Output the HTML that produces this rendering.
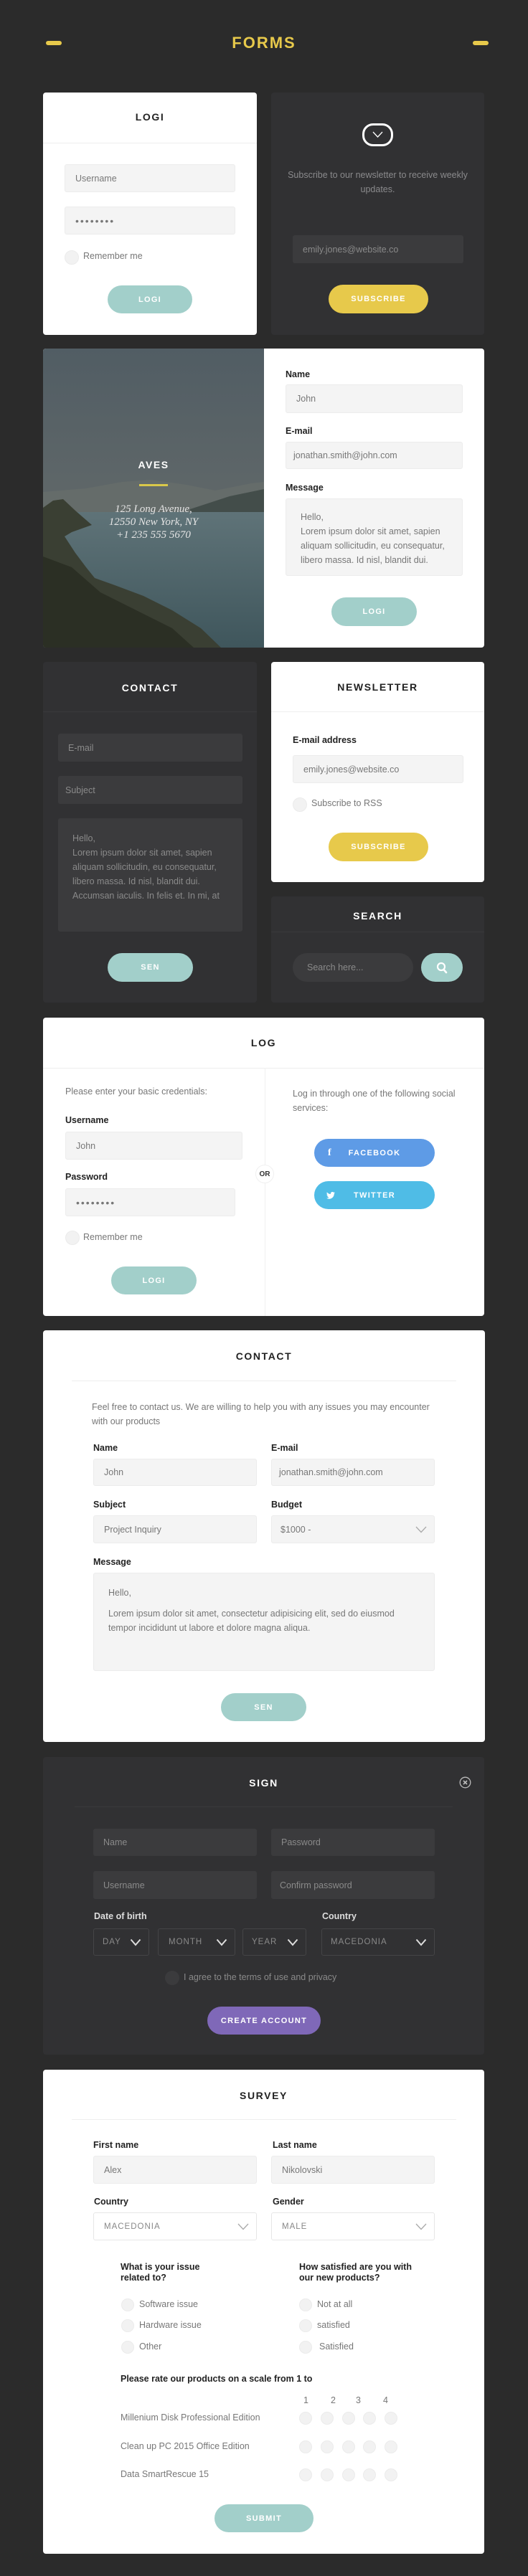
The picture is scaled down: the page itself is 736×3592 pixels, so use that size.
<!DOCTYPE html>
<html><head><meta charset="utf-8">
<style>
*{margin:0;padding:0;box-sizing:border-box}
body{width:736px;height:3592px;background:#2b2b2b;position:relative;font-family:"Liberation Sans",sans-serif;overflow:hidden}
.a{position:absolute}
.card{position:absolute;border-radius:4px}
.w{background:#fff}
.d{background:#313133}
.t{position:absolute;left:0;right:0;text-align:center;font-weight:bold;font-size:14px;letter-spacing:1.6px}
.hr{position:absolute;height:1px;background:#eeeeee}
.hrd{position:absolute;height:1px;background:#3a3a3c}
.in{position:absolute;background:#f4f4f4;border:1px solid #ececec;border-radius:3px;color:#777;font-size:12.5px;padding-left:14px;display:flex;align-items:center}
.ind{position:absolute;background:#3b3b3d;border-radius:3px;color:#8a8a8a;font-size:12.5px;padding-left:14px;display:flex;align-items:center}
.ta{display:block !important}
.lb{position:absolute;font-weight:bold;font-size:12.5px;color:#222}
.btn{position:absolute;border-radius:20px;color:#fff;font-weight:bold;font-size:11px;letter-spacing:1.3px;display:flex;align-items:center;justify-content:center}
.teal{background:#a2cfca}
.yel{background:#e7c94b}
.rad{position:absolute;width:18px;height:18px;border-radius:50%;background:#f2f2f2;border:1px solid #ebebeb}
.tx{position:absolute;font-size:12.5px;color:#777}
.sel{position:absolute;border:1px solid #e6e6e6;background:#fff;border-radius:3px;font-size:11.5px;letter-spacing:1px;color:#888;padding-left:14px;display:flex;align-items:center}
.seld{position:absolute;border:1px solid #454547;border-radius:3px;font-size:11.5px;letter-spacing:1px;color:#8a8a8a;padding-left:12px;display:flex;align-items:center}
.chev{position:absolute;top:50%;margin-top:-5px}
</style></head><body>

<!-- header -->
<div class="a" style="left:64px;top:57px;width:22px;height:6px;border-radius:3px;background:#e7c94b"></div>
<div class="a" style="left:659px;top:57px;width:22px;height:6px;border-radius:3px;background:#e7c94b"></div>
<div class="a" style="left:0;right:0;top:47px;text-align:center;color:#e7c94b;font-weight:bold;font-size:22px;letter-spacing:2px">FORMS</div>

<!-- login card -->
<div class="card w" style="left:60px;top:129px;width:298px;height:338px">
  <div class="t" style="top:26px;color:#222">LOGI</div>
  <div class="hr" style="left:0;right:0;top:70px"></div>
  <div class="in" style="left:30px;top:100px;width:238px;height:39px">Username</div>
  <div class="in" style="left:30px;top:159px;width:238px;height:39px;letter-spacing:2px;font-size:14px;color:#777">••••••••</div>
  <div class="rad" style="left:30px;top:220px;width:20px;height:20px"></div>
  <div class="tx" style="left:56px;top:221px">Remember me</div>
  <div class="btn teal" style="left:90px;top:269px;width:118px;height:39px">LOGI</div>
</div>

<!-- subscribe dark card -->
<div class="card d" style="left:378px;top:129px;width:297px;height:338px">
  <div class="a" style="left:127px;top:43px;width:43px;height:32px;border:3px solid #fff;border-radius:15px"></div>
  <svg class="a" style="left:140px;top:53px" width="17" height="12" viewBox="0 0 17 12"><path d="M2 2 L8.5 9 L15 2" fill="none" stroke="#fff" stroke-width="1.3"/></svg>
  <div class="a" style="left:20px;right:20px;top:105px;text-align:center;font-size:12.5px;line-height:20px;color:#8a8a8c">Subscribe to our newsletter to receive weekly updates.</div>
  <div class="ind" style="left:30px;top:199px;width:238px;height:39px">emily.jones@website.co</div>
  <div class="btn yel" style="left:80px;top:268px;width:139px;height:40px">SUBSCRIBE</div>
</div>

<!-- image + contact -->
<div class="card" style="left:60px;top:486px;width:615px;height:417px;overflow:hidden;background:#fff">
  <svg class="a" style="left:0;top:0" width="308" height="417" viewBox="0 0 308 417">
    <defs>
      <linearGradient id="sky" x1="0" y1="0" x2="0" y2="1"><stop offset="0" stop-color="#515d64"/><stop offset="1" stop-color="#6d716d"/></linearGradient>
      <linearGradient id="lake" x1="0" y1="0" x2="0" y2="1"><stop offset="0" stop-color="#5f7378"/><stop offset="1" stop-color="#3f565c"/></linearGradient>
    </defs>
    <rect width="308" height="417" fill="url(#sky)"/>
    <path d="M0 200 L60 195 L110 186 L150 183 L200 190 L240 198 L290 188 L308 186 L308 232 L0 232Z" fill="#656c6a"/>
    <path d="M205 224 L260 206 L308 196 L308 230 L205 230Z" fill="#434d4a"/>
    <rect x="0" y="228" width="308" height="189" fill="url(#lake)"/>
    <path d="M0 222 L14 212 L28 210 L45 226 L68 246 L40 256 L30 262 L45 285 L60 305 L72 320 L100 330 L140 345 L180 365 L220 390 L248 417 L0 417Z" fill="#3a3f33"/>
    <path d="M0 290 L40 305 L80 340 L130 365 L180 390 L210 417 L0 417Z" fill="#2b2f24"/>
  </svg>
  <div class="a" style="left:0;width:308px;top:154px;text-align:center;color:#fff;font-weight:bold;font-size:14px;letter-spacing:1.5px">AVES</div>
  <div class="a" style="left:134px;top:189px;width:40px;height:3px;background:#d9c84a"></div>
  <div class="a" style="left:0;width:308px;top:215px;text-align:center;color:#e4e4e4;font-family:'Liberation Serif',serif;font-style:italic;font-size:15px;line-height:18px">125 Long Avenue,<br>12550 New York, NY<br>+1 235 555 5670</div>
  <div class="lb" style="left:338px;top:29px">Name</div>
  <div class="in" style="left:338px;top:50px;width:247px;height:40px">John</div>
  <div class="lb" style="left:338px;top:108px">E-mail</div>
  <div class="in" style="left:338px;top:130px;width:247px;height:38px;padding-left:10px">jonathan.smith@john.com</div>
  <div class="lb" style="left:338px;top:187px">Message</div>
  <div class="in ta" style="left:338px;top:209px;width:247px;height:108px;padding:15px 14px 0 20px;line-height:20px">Hello,<br>Lorem ipsum dolor sit amet, sapien aliquam sollicitudin, eu consequatur, libero massa. Id nisl, blandit dui.</div>
  <div class="btn teal" style="left:402px;top:347px;width:119px;height:40px">LOGI</div>
</div>

<!-- contact dark -->
<div class="card d" style="left:60px;top:923px;width:298px;height:475px">
  <div class="t" style="top:28px;color:#fff">CONTACT</div>
  <div class="hrd" style="left:0;right:0;top:69px"></div>
  <div class="ind" style="left:21px;top:100px;width:257px;height:39px">E-mail</div>
  <div class="ind" style="left:21px;top:159px;width:257px;height:39px;padding-left:10px">Subject</div>
  <div class="ind ta" style="left:21px;top:218px;width:257px;height:158px;padding:18px 14px 0 20px;line-height:20px">Hello,<br>Lorem ipsum dolor sit amet, sapien aliquam sollicitudin, eu consequatur, libero massa. Id nisl, blandit dui. Accumsan iaculis. In felis et. In mi, at</div>
  <div class="btn teal" style="left:90px;top:406px;width:119px;height:40px">SEN</div>
</div>

<!-- newsletter -->
<div class="card w" style="left:378px;top:923px;width:297px;height:307px">
  <div class="t" style="top:27px;color:#222">NEWSLETTER</div>
  <div class="hr" style="left:0;right:0;top:69px"></div>
  <div class="lb" style="left:30px;top:102px">E-mail address</div>
  <div class="in" style="left:30px;top:130px;width:238px;height:39px">emily.jones@website.co</div>
  <div class="rad" style="left:30px;top:189px;width:20px;height:20px"></div>
  <div class="tx" style="left:56px;top:190px">Subscribe to RSS</div>
  <div class="btn yel" style="left:80px;top:238px;width:139px;height:40px">SUBSCRIBE</div>
</div>

<!-- search -->
<div class="card d" style="left:378px;top:1250px;width:297px;height:148px">
  <div class="t" style="top:19px;color:#fff">SEARCH</div>
  <div class="hrd" style="left:0;right:0;top:49px"></div>
  <div class="ind" style="left:30px;top:79px;width:168px;height:40px;border-radius:20px;padding-left:20px">Search here...</div>
  <div class="a" style="left:209px;top:79px;width:58px;height:40px;border-radius:20px;background:#a2cfca"></div>
  <svg class="a" style="left:230px;top:91px" width="16" height="17" viewBox="0 0 16 17"><circle cx="7" cy="7" r="5" fill="none" stroke="#fff" stroke-width="2.2"/><path d="M10.5 11 L14 15" stroke="#fff" stroke-width="2.6" stroke-linecap="round"/></svg>
</div>

<!-- LOG -->
<div class="card w" style="left:60px;top:1419px;width:615px;height:416px">
  <div class="t" style="top:27px;color:#222">LOG</div>
  <div class="hr" style="left:0;right:0;top:70px"></div>
  <div class="a" style="left:309px;top:70px;width:1px;bottom:0;background:#f0f0f0"></div>
  <div class="a" style="left:296px;top:205px;width:26px;height:26px;border-radius:50%;background:#fff;border:1px solid #f0f0f0;font-size:10px;font-weight:bold;color:#333;display:flex;align-items:center;justify-content:center">OR</div>
  <div class="tx" style="left:31px;top:96px">Please enter your basic credentials:</div>
  <div class="lb" style="left:31px;top:136px">Username</div>
  <div class="in" style="left:31px;top:159px;width:247px;height:39px">John</div>
  <div class="lb" style="left:31px;top:215px">Password</div>
  <div class="in" style="left:31px;top:238px;width:237px;height:39px;letter-spacing:2px;font-size:14px">••••••••</div>
  <div class="rad" style="left:31px;top:297px;width:20px;height:20px"></div>
  <div class="tx" style="left:56px;top:299px">Remember me</div>
  <div class="btn teal" style="left:95px;top:347px;width:119px;height:39px">LOGI</div>
  <div class="tx" style="left:348px;top:96px;width:240px;line-height:20px">Log in through one of the following social services:</div>
  <div class="btn" style="left:378px;top:169px;width:168px;height:39px;background:#5e9be6"><span style="position:absolute;left:19px;font-size:14px;font-family:'Liberation Serif',serif">f</span>FACEBOOK</div>
  <div class="btn" style="left:378px;top:228px;width:168px;height:39px;background:#4fbce6"><svg style="position:absolute;left:17px" width="12" height="10" viewBox="0 0 24 20"><path d="M24 2.4a9.8 9.8 0 0 1-2.8.8A4.9 4.9 0 0 0 23.3.4a9.9 9.9 0 0 1-3.1 1.2A4.9 4.9 0 0 0 11.8 6 14 14 0 0 1 1.7.9a4.9 4.9 0 0 0 1.5 6.6A4.9 4.9 0 0 1 1 6.9a4.9 4.9 0 0 0 3.9 4.8 4.9 4.9 0 0 1-2.2.1 4.9 4.9 0 0 0 4.6 3.4A9.9 9.9 0 0 1 0 17.3 14 14 0 0 0 7.5 19.5c9 0 14-7.5 14-14v-.6A10 10 0 0 0 24 2.4z" fill="#fff"/></svg>TWITTER</div>
</div>

<!-- CONTACT white -->
<div class="card w" style="left:60px;top:1855px;width:616px;height:574px">
  <div class="t" style="top:28px;color:#222">CONTACT</div>
  <div class="hr" style="left:40px;width:536px;top:70px"></div>
  <div class="tx" style="left:68px;top:97px;width:480px;line-height:20px">Feel free to contact us. We are willing to help you with any issues you may encounter with our products</div>
  <div class="lb" style="left:70px;top:157px">Name</div>
  <div class="lb" style="left:318px;top:157px">E-mail</div>
  <div class="in" style="left:70px;top:179px;width:228px;height:38px">John</div>
  <div class="in" style="left:318px;top:179px;width:228px;height:38px;padding-left:10px">jonathan.smith@john.com</div>
  <div class="lb" style="left:70px;top:236px">Subject</div>
  <div class="lb" style="left:318px;top:236px">Budget</div>
  <div class="in" style="left:70px;top:258px;width:228px;height:39px">Project Inquiry</div>
  <div class="in" style="left:318px;top:258px;width:228px;height:39px;padding-left:12px">$1000 -<svg class="chev" style="right:10px" width="16" height="10" viewBox="0 0 16 10"><path d="M1 1 L8 8.5 L15 1" fill="none" stroke="#aaa" stroke-width="1.3"/></svg></div>
  <div class="lb" style="left:70px;top:316px">Message</div>
  <div class="in ta" style="left:70px;top:338px;width:476px;height:137px;padding:17px 20px 0 20px;line-height:20px">Hello,<div style="margin-top:9px">Lorem ipsum dolor sit amet, consectetur adipisicing elit, sed do eiusmod tempor incididunt ut labore et dolore magna aliqua.</div></div>
  <div class="btn teal" style="left:248px;top:506px;width:119px;height:39px">SEN</div>
</div>

<!-- SIGN dark -->
<div class="card d" style="left:60px;top:2450px;width:615px;height:415px">
  <div class="t" style="top:28px;color:#fff">SIGN</div>
  <svg class="a" style="left:580px;top:27px" width="17" height="17" viewBox="0 0 17 17"><circle cx="8.5" cy="8.5" r="7.3" fill="none" stroke="#bbb" stroke-width="1.3"/><path d="M6 6 L11 11 M11 6 L6 11" stroke="#bbb" stroke-width="1.6"/></svg>
  <div class="hrd" style="left:44px;width:527px;top:69px"></div>
  <div class="ind" style="left:70px;top:100px;width:228px;height:38px">Name</div>
  <div class="ind" style="left:318px;top:100px;width:228px;height:38px">Password</div>
  <div class="ind" style="left:70px;top:159px;width:228px;height:39px">Username</div>
  <div class="ind" style="left:318px;top:159px;width:228px;height:39px;padding-left:12px">Confirm password</div>
  <div class="lb" style="left:71px;top:215px;color:#ddd">Date of birth</div>
  <div class="lb" style="left:389px;top:215px;color:#ddd">Country</div>
  <div class="seld" style="left:70px;top:239px;width:78px;height:38px">DAY<svg class="chev" style="right:10px" width="16" height="11" viewBox="0 0 16 11"><path d="M1.5 1.5 L8 9 L14.5 1.5" fill="none" stroke="#ddd" stroke-width="2"/></svg></div>
  <div class="seld" style="left:160px;top:239px;width:108px;height:38px;padding-left:14px">MONTH<svg class="chev" style="right:10px" width="16" height="11" viewBox="0 0 16 11"><path d="M1.5 1.5 L8 9 L14.5 1.5" fill="none" stroke="#ddd" stroke-width="2"/></svg></div>
  <div class="seld" style="left:278px;top:239px;width:89px;height:38px">YEAR<svg class="chev" style="right:10px" width="16" height="11" viewBox="0 0 16 11"><path d="M1.5 1.5 L8 9 L14.5 1.5" fill="none" stroke="#ddd" stroke-width="2"/></svg></div>
  <div class="seld" style="left:388px;top:239px;width:158px;height:38px">MACEDONIA<svg class="chev" style="right:10px" width="16" height="11" viewBox="0 0 16 11"><path d="M1.5 1.5 L8 9 L14.5 1.5" fill="none" stroke="#ddd" stroke-width="2"/></svg></div>
  <div class="a" style="left:170px;top:298px;width:20px;height:20px;border-radius:50%;background:#3b3b3d"></div>
  <div class="tx" style="left:196px;top:300px;color:#8a8a8a">I agree to the terms of use and privacy</div>
  <div class="btn" style="left:229px;top:348px;width:158px;height:39px;background:#7f68b8">CREATE ACCOUNT</div>
</div>

<!-- SURVEY -->
<div class="card w" style="left:60px;top:2886px;width:615px;height:675px">
  <div class="t" style="top:28px;color:#222">SURVEY</div>
  <div class="hr" style="left:40px;width:536px;top:69px"></div>
  <div class="lb" style="left:70px;top:98px">First name</div>
  <div class="lb" style="left:320px;top:98px">Last name</div>
  <div class="in" style="left:70px;top:120px;width:228px;height:39px">Alex</div>
  <div class="in" style="left:318px;top:120px;width:228px;height:39px">Nikolovski</div>
  <div class="lb" style="left:71px;top:177px">Country</div>
  <div class="lb" style="left:320px;top:177px">Gender</div>
  <div class="sel" style="left:70px;top:199px;width:228px;height:39px">MACEDONIA<svg class="chev" style="right:10px" width="16" height="10" viewBox="0 0 16 10"><path d="M1 1 L8 8.5 L15 1" fill="none" stroke="#aaa" stroke-width="1.3"/></svg></div>
  <div class="sel" style="left:318px;top:199px;width:228px;height:39px">MALE<svg class="chev" style="right:10px" width="16" height="10" viewBox="0 0 16 10"><path d="M1 1 L8 8.5 L15 1" fill="none" stroke="#aaa" stroke-width="1.3"/></svg></div>
  <div class="lb" style="left:108px;top:268px;line-height:15px">What is your issue<br>related to?</div>
  <div class="lb" style="left:357px;top:268px;line-height:15px">How satisfied are you with<br>our new products?</div>
  <div class="rad" style="left:109px;top:319px"></div><div class="tx" style="left:134px;top:320px">Software issue</div>
  <div class="rad" style="left:109px;top:348px"></div><div class="tx" style="left:134px;top:349px">Hardware issue</div>
  <div class="rad" style="left:109px;top:378px"></div><div class="tx" style="left:134px;top:379px">Other</div>
  <div class="rad" style="left:357px;top:319px"></div><div class="tx" style="left:382px;top:320px">Not at all</div>
  <div class="rad" style="left:357px;top:348px"></div><div class="tx" style="left:382px;top:349px">satisfied</div>
  <div class="rad" style="left:357px;top:378px"></div><div class="tx" style="left:385px;top:379px">Satisfied</div>
  <div class="lb" style="left:108px;top:424px">Please rate our products on a scale from 1 to</div>
  <div class="tx" style="left:363px;top:454px">1</div>
  <div class="tx" style="left:401px;top:454px">2</div>
  <div class="tx" style="left:436px;top:454px">3</div>
  <div class="tx" style="left:474px;top:454px">4</div>
  <div class="tx" style="left:108px;top:478px">Millenium Disk Professional Edition</div>
  <div class="tx" style="left:108px;top:518px">Clean up PC 2015 Office Edition</div>
  <div class="tx" style="left:108px;top:557px">Data SmartRescue 15</div>
  <div class="rad" style="left:357px;top:477px"></div><div class="rad" style="left:387px;top:477px"></div><div class="rad" style="left:417px;top:477px"></div><div class="rad" style="left:446px;top:477px"></div><div class="rad" style="left:476px;top:477px"></div>
  <div class="rad" style="left:357px;top:517px"></div><div class="rad" style="left:387px;top:517px"></div><div class="rad" style="left:417px;top:517px"></div><div class="rad" style="left:446px;top:517px"></div><div class="rad" style="left:476px;top:517px"></div>
  <div class="rad" style="left:357px;top:556px"></div><div class="rad" style="left:387px;top:556px"></div><div class="rad" style="left:417px;top:556px"></div><div class="rad" style="left:446px;top:556px"></div><div class="rad" style="left:476px;top:556px"></div>
  <div class="btn teal" style="left:239px;top:606px;width:138px;height:39px">SUBMIT</div>
</div>

</body></html>
